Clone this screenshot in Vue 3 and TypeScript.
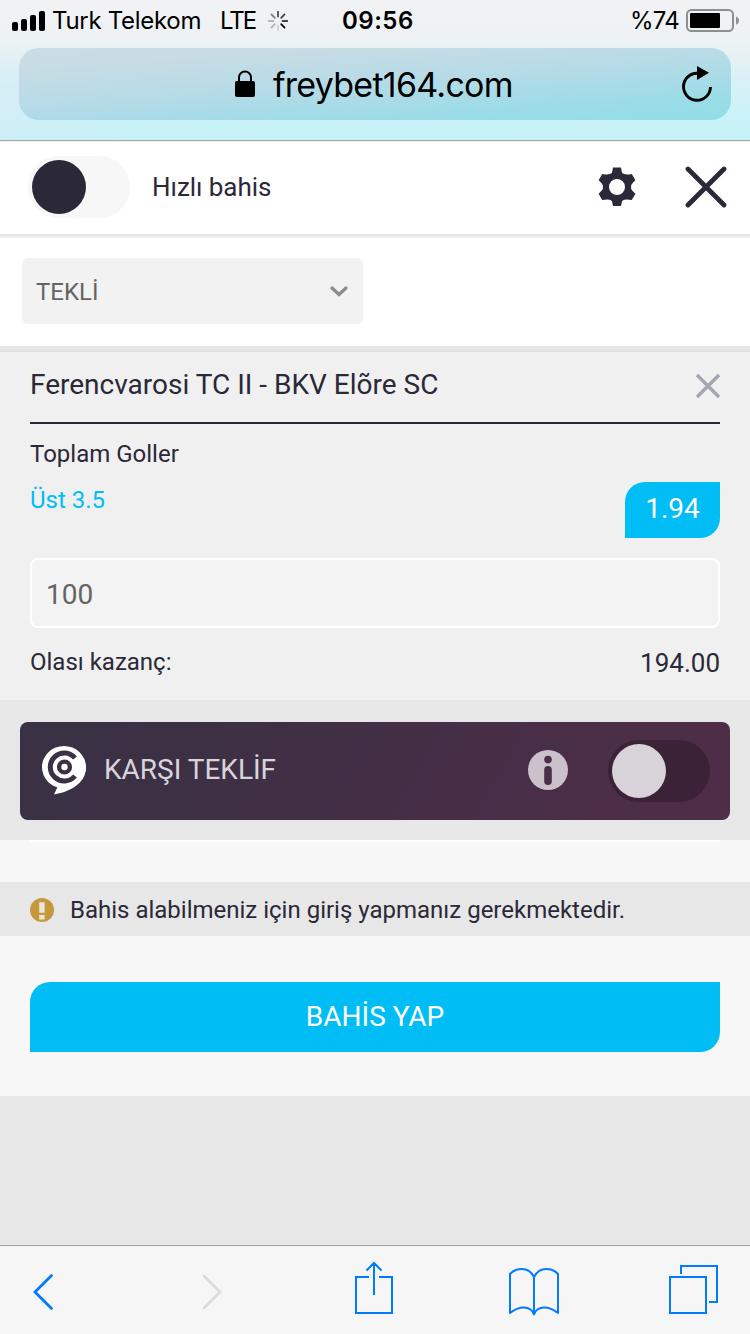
<script setup lang="ts">
import { ref } from 'vue'

const quickBet = ref<boolean>(false)
const counterOffer = ref<boolean>(false)
const stake = ref<string>('100')
const spokes: number[] = [0.72, 0.75, 0.95, 1, 0.12, 0.25, 0.32, 0.5]
</script>

<template>
  <div class="screen">
    <header class="chrome">
      <div class="status">
        <svg class="signal" width="34" height="20" viewBox="0 0 34 20">
          <rect x="0" y="11" width="6" height="9" rx="2" />
          <rect x="9" y="8" width="6" height="12" rx="2" />
          <rect x="18" y="4" width="6" height="16" rx="2" />
          <rect x="27" y="0" width="6" height="20" rx="2" />
        </svg>
        <span class="carrier">Turk Telekom</span>
        <span class="network">LTE</span>
        <svg class="spinner" width="20" height="20" viewBox="-10 -10 20 20">
          <path v-for="(o, i) in spokes" :key="i" d="M0 -4.5V-9.3" stroke="#000" stroke-width="1.7" stroke-linecap="round" :opacity="o" :transform="`rotate(${i * 45})`" />
        </svg>
        <span class="clock">09:56</span>
        <span class="percent">%74</span>
        <svg class="battery" width="54" height="24" viewBox="0 0 54 24">
          <rect x="1" y="1" width="46" height="21" rx="4.5" fill="none" stroke="#8c8f90" stroke-width="2" />
          <rect x="4" y="4" width="30" height="15" rx="1" />
          <path d="M50 7.5q3 1 3 4t-3 4z" fill="#8c8f90" />
        </svg>
      </div>
      <div class="address">
        <svg class="lock" width="20" height="28" viewBox="0 0 20 28">
          <path d="M4 13V7.5a6 6 0 0 1 12 0V13" fill="none" stroke="#000" stroke-width="2" />
          <rect x="0" y="11" width="20" height="16" rx="2" />
        </svg>
        <span class="url">freybet164.com</span>
        <svg class="reload" width="32" height="36" viewBox="0 0 32 36">
          <path d="M28.5 21A13.5 13.5 0 1 1 15 7.2H17" fill="none" stroke="#000" stroke-width="2.9" />
          <path d="M15 0L27 6.8L15 14z" />
        </svg>
      </div>
    </header>

    <section class="quick">
      <button class="toggle light" :class="{ on: quickBet }" @click="quickBet = !quickBet"><i></i></button>
      <span class="quick-label">Hızlı bahis</span>
      <svg class="gear" width="38" height="40" viewBox="-19 -20 38 40">
        <path fill-rule="evenodd" d="M-4 -19.4H4L5.1 -14Q8 -11.6 14.8 -13.1L18.4 -6.8Q13 -2 14.2 0Q13 2 18.4 6.8L14.8 13.1Q8 11.6 5.1 14L4 18.9H-4L-5.1 14Q-8 11.6 -14.8 13.1L-18.4 6.8Q-13 2 -14.2 0Q-13 -2 -18.4 -6.8L-14.8 -13.1Q-8 -11.6 -5.1 -14ZM0 -8A8 8 0 1 0 0 8A8 8 0 1 0 0 -8Z" fill="#2b2838" />
      </svg>
      <svg class="close" width="42" height="42" viewBox="0 0 42 42">
        <path d="M3 3L39 39M39 3L3 39" stroke="#2b2838" stroke-width="4.8" stroke-linecap="round" />
      </svg>
    </section>

    <section class="type-row">
      <div class="select">
        <span>TEKLİ</span>
        <svg width="18" height="12" viewBox="0 0 18 12"><path d="M2 2L9 8.5L16 2" fill="none" stroke="#8b8b8b" stroke-width="3.2" stroke-linecap="round" /></svg>
      </div>
    </section>

    <section class="bet">
      <div class="match">
        <h1>Ferencvarosi TC II - BKV Elõre SC</h1>
        <svg width="26" height="26" viewBox="0 0 26 26"><path d="M3 2L25 24M25 2L3 24" stroke="#a3a7b0" stroke-width="3.4" /></svg>
      </div>
      <div class="pick">
        <div class="market">
          <p>Toplam Goller</p>
          <p class="choice">Üst 3.5</p>
        </div>
        <div class="odds">1.94</div>
      </div>
      <input v-model="stake" class="stake" inputmode="decimal" />
      <div class="win"><span>Olası kazanç:</span><span class="amount">194.00</span></div>
    </section>

    <section class="counter-wrap">
      <div class="counter">
        <svg class="brand" width="46" height="50" viewBox="0 0 46 50">
          <ellipse cx="22" cy="21.2" rx="22" ry="21.2" fill="#fff" />
          <path d="M44 21C44 36 30 45.500 12 48.500L15.500 41L24 36Z" fill="#fff" />
          <path d="M33 12A14 14 0 1 0 33 30" fill="none" stroke="#3c3044" stroke-width="5" />
          <circle cx="22.5" cy="21" r="5.4" fill="none" stroke="#3c3044" stroke-width="4.4" />
        </svg>
        <span class="counter-label">KARŞI TEKLİF</span>
        <svg class="info" width="40" height="40" viewBox="0 0 40 40">
          <circle cx="20" cy="20" r="20" fill="#cac1ca" />
          <circle cx="20" cy="9.6" r="3.8" fill="#4b2e49" />
          <rect x="16.2" y="16" width="7.6" height="19" rx="3.8" fill="#4b2e49" />
        </svg>
        <button class="toggle dark" :class="{ on: counterOffer }" @click="counterOffer = !counterOffer"><i></i></button>
      </div>
    </section>

    <section class="submit">
      <div class="rule"></div>
      <div class="notice">
        <svg width="24" height="24" viewBox="0 0 24 24">
          <circle cx="12" cy="12" r="12" fill="#c5983b" />
          <path d="M9.2 4.2h5.4v10.6h-5.4zM9.2 17h5.4v4.4h-5.4z" fill="#e8e5df" />
        </svg>
        <span>Bahis alabilmeniz için giriş yapmanız gerekmektedir.</span>
      </div>
      <button class="place">BAHİS YAP</button>
    </section>

    <nav class="toolbar">
      <svg width="750" height="88" viewBox="0 1246 750 88" fill="none" stroke="#007aff" stroke-width="2">
        <path d="M51.5 1275.5L35 1292L51.5 1308.5" stroke-width="2.8" stroke-linecap="round" />
        <path d="M204 1276L220 1292L204 1308" stroke="#dcdcdc" stroke-width="2.8" stroke-linecap="round" />
        <path d="M369 1277H356V1313H392V1277H379M374 1295V1263M366.5 1270.5L374 1263L381.5 1270.5" />
        <path stroke-linejoin="round" d="M534 1313.5V1277Q530 1269 521.5 1269Q514.5 1269 510 1274V1313Q517 1307.5 524 1307.5Q531.500 1307.500 534 1314.500Q536.500 1307.500 544 1307.500Q551 1307.500 558 1313V1274Q553.500 1269 546.500 1269Q538 1269 534 1277" />
        <path d="M670 1277H706V1313H670ZM681 1274V1266H717V1302H709" />
      </svg>
    </nav>
  </div>
</template>

<style>
body { margin: 0; }
</style>

<style scoped>
.screen { width: 750px; height: 1334px; overflow: hidden; display: flex; flex-direction: column; background: #e7e7e7; color: #2b2838; font-family: Roboto, sans-serif; }
.screen * { box-sizing: border-box; }
svg { display: block; flex: none; }
button { border: 0; padding: 0; font: inherit; }
span, h1 { white-space: nowrap; }
.chrome { flex: none; height: 142px; border-bottom: 1px solid #f1eeee; box-shadow: inset 0 -1px #a5a6a7; background: radial-gradient(ellipse 140px 70px at 0 110px, rgba(213, 236, 246, .8), transparent), linear-gradient(180deg, #f2f2f4 0, #edf2f4 42px, #d9f1f6 80px, #c9f3f8 118px, #c5f1f8 140px); font-family: Inter, sans-serif; color: #000; }
.status { display: flex; align-items: center; height: 42px; padding-left: 12px; font-size: 24px; line-height: 42px; }
.signal { margin-right: 6px; }
.carrier { width: 168px; letter-spacing: -.3px; }
.network { width: 48px; letter-spacing: -2px; }
.spinner { margin-right: 54px; }
.clock { width: 288px; font-weight: 600; letter-spacing: .5px; }
.percent { width: 56px; letter-spacing: -.7px; }
.address { display: flex; align-items: center; height: 72px; margin: 6px 19px 0; padding-left: 216px; border-radius: 20px; background: linear-gradient(176deg, #cbdce4 0, #c7dce4 18%, #b6dbe7 48%, #9bdce7 80%, #91dde8 100%); }
.lock { margin-right: 18px; }
.url { width: 409px; font-size: 34px; line-height: 72px; letter-spacing: -.74px; padding-top: 1px; }
.quick { flex: none; height: 96px; display: flex; align-items: center; padding: 0 23px 6px 28px; background: #fff; box-shadow: inset 0 -2px #efefef, inset 0 -4px #e6e6e6; }
.toggle { flex: none; width: 102px; height: 62px; padding: 4px; border-radius: 31px; }
.toggle i { display: block; width: 54px; height: 54px; border-radius: 50%; }
.toggle.on i { margin-left: 40px; }
.light { background: #f7f7f7; }
.light i { background: #2b2838; }
.dark { background: #3b2236; }
.dark i { background: #d8d3d8; }
.quick-label { width: 446px; margin-left: 22px; font-size: 26px; letter-spacing: -.05px; }
.close { margin-left: 49px; }
.type-row { flex: none; height: 114px; padding: 20px 22px; background: #fff; box-shadow: inset 0 -2px #e0e0e0, inset 0 -6px #e6e6e6; }
.select { width: 341px; height: 66px; border-radius: 6px; background: #f2f2f2; display: flex; align-items: center; justify-content: space-between; padding: 1px 15px 0 14px; color: #646464; font-size: 24px; }
.bet { flex: none; height: 348px; padding: 0 30px; background: #f0f0f0; }
.match { display: flex; align-items: center; justify-content: space-between; height: 72px; padding-bottom: 2px; border-bottom: 2px solid #2b2838; }
h1 { margin: 0; padding-bottom: 4px; font-size: 28px; font-weight: 400; }
.pick { display: flex; justify-content: space-between; height: 134px; }
.market p { margin: 0; font-size: 24px; line-height: 46px; }
.market { padding-top: 7px; }
.market .choice { color: #00bdf6; }
.odds { width: 95px; height: 56px; margin-top: 58px; border-radius: 20px 0; background: #00bdf6; color: #fff; font-size: 28px; line-height: 54px; text-align: center; }
.stake { display: block; width: 690px; height: 70px; border: 2px solid #fff; border-radius: 8px; background: #f3f3f3; padding: 3px 14px 0; color: #646464; font: 28px Roboto, sans-serif; outline: 0; }
.win { display: flex; justify-content: space-between; font-size: 24px; line-height: 68px; }
.amount { font-size: 26px; line-height: 70px; }
.counter-wrap { flex: none; height: 140px; padding: 22px 20px; background: #e7e7e7; }
.counter { display: flex; align-items: center; height: 98px; padding-left: 22px; border-radius: 8px; background: linear-gradient(120deg, #393145 0, #3d3045 25%, #432e46 50%, #492e48 72%, #502d48 100%); }
.counter-label { width: 424px; margin-left: 16px; color: #d8d5da; font-size: 28px; padding-bottom: 3px; }
.info { margin-bottom: 2px; }
.dark { margin-left: 40px; }
.submit { flex: none; height: 256px; background: #f7f7f7; }
.rule { height: 2px; margin: 0 30px 40px; background: #fff; }
.notice { height: 54px; display: flex; align-items: center; gap: 16px; padding: 1px 30px 0; background: #e7e7e7; font-size: 24px; }
.place { display: block; width: 690px; height: 70px; margin: 46px 30px 0; padding-bottom: 2px; border-radius: 20px 0; background: #00bdf6; color: #fff; font-size: 28px; }
.toolbar { flex: none; height: 89px; margin-top: auto; border-top: 1px solid #a0a0a0; background: #f6f6f6; }
</style>
